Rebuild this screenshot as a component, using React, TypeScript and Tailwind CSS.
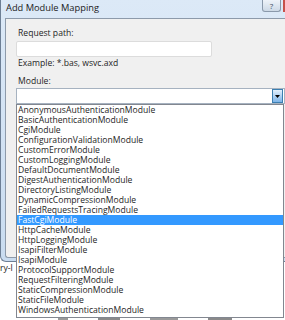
import React from "react";

const items = [
  "AnonymousAuthenticationModule",
  "BasicAuthenticationModule",
  "CgiModule",
  "ConfigurationValidationModule",
  "CustomErrorModule",
  "CustomLoggingModule",
  "DefaultDocumentModule",
  "DigestAuthenticationModule",
  "DirectoryListingModule",
  "DynamicCompressionModule",
  "FailedRequestsTracingModule",
  "FastCgiModule",
  "HttpCacheModule",
  "HttpLoggingModule",
  "IsapiFilterModule",
  "IsapiModule",
  "ProtocolSupportModule",
  "RequestFilteringModule",
  "StaticCompressionModule",
  "StaticFileModule",
  "WindowsAuthenticationModule",
];

export default function App() {
  return (
    <div
      className="relative w-[285px] h-[320px] overflow-hidden bg-white text-[#1e1e1e]"
      style={{ fontFamily: '"Open Sans", "Noto Sans", sans-serif' }}
    >
      {/* Dialog window */}
      <div className="flex flex-col h-[262px] bg-gradient-to-b from-[#dce9f7] to-[#c9dcf0] border-l border-l-[#6d7f95] rounded-bl-[6px] border-b border-b-[#6d7f95]">
        {/* Title bar */}
        <div className="flex h-[18px] items-start">
          <div className="pl-[5px] pt-[2px] text-[9.3px] leading-[12px] text-[#1b1b1b]">Add Module Mapping</div>
          <div className="flex-1" />
          <div className="mr-[2px] flex h-[12px] w-[19px] items-center justify-center rounded-b-[3px] border border-t-0 border-[#8a99ab] bg-gradient-to-b from-[#eef3f9] to-[#cdd9e6] text-[8px] leading-[8px] text-[#43505f]">
            ?
          </div>
          <div className="h-[12px] w-[2px] bg-[#c7504a]" />
        </div>
        {/* Body */}
        <div className="ml-[4px] flex-1 mb-[3px] rounded-bl-[3px] border-l border-t border-b border-[#8d9aaa] bg-[#f0f0f0] pl-[10px]">
          <div className="mt-[9px] pl-[2px] text-[8.6px] leading-[10px]">Request path:</div>
          <div className="mt-[3px] h-[16px] w-[196px] rounded-[2px] border border-[#dcdcdc] bg-white" />
          <div className="mt-[1px] pl-[2px] text-[8.6px] leading-[10px]">Example: *.bas, wsvc.axd</div>
          <div className="mt-[8px] pl-[2px] text-[8.6px] leading-[10px]">Module:</div>
          <div className="mt-[2px] flex h-[16px] w-[269px] items-center justify-end border border-[#a6b2c0] bg-white pr-[1px]">
            <div className="flex h-[14px] w-[11px] items-center justify-center border border-[#3c7fb1] bg-gradient-to-b from-[#e3f0fc] to-[#7db4e8]">
              <svg width="5" height="3" viewBox="0 0 5 3">
                <path d="M0 0 H5 L2.5 3 Z" fill="#000" />
              </svg>
            </div>
          </div>
        </div>
      </div>

      {/* Background window fragment below dialog */}
      <div className="pt-[1px] text-[8.6px] leading-[10px] text-[#222]">ry-l</div>

      {/* Dropdown list overlay */}
      <div className="absolute left-[16px] top-[104px] w-[268px] h-[214px] border border-[#828790] bg-white">
        {items.map((it) => (
          <div
            key={it}
            className={
              it === "FastCgiModule"
                ? "h-[10px] bg-[#3399ff] pl-[1px] text-[8.6px] leading-[10px] text-white"
                : "h-[10px] pl-[1px] text-[8.6px] leading-[10px] text-[#1e1e1e]"
            }
          >
            {it}
          </div>
        ))}
      </div>
      <div className="absolute left-[58px] top-[318px] flex gap-[30px]">
        <div className="h-[2px] w-[10px] bg-[#9a9a9a]" />
        <div className="h-[2px] w-[22px] bg-[#8a8a8a]" />
        <div className="h-[2px] w-[28px] bg-[#9a9a9a]" />
        <div className="h-[2px] w-[24px] bg-[#8a8a8a]" />
      </div>
    </div>
  );
}
